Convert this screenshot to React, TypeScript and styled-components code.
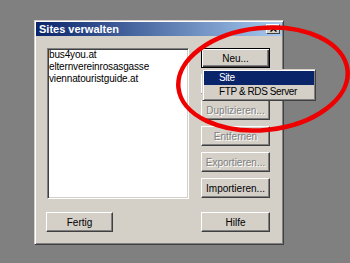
import styled, { createGlobalStyle } from "styled-components";

const GlobalStyle = createGlobalStyle`
  body {
    margin: 0;
    background: #808080;
    font-family: "Liberation Sans", Arial, sans-serif;
  }
`;

const Page = styled.div`
  position: relative;
  width: 350px;
  height: 263px;
  box-sizing: border-box;
  padding: 20px 0 0 34px;
  background: #808080;
`;

const Dialog = styled.div`
  width: 250px;
  height: 225px;
  box-sizing: border-box;
  padding: 1px;
  background: #d4d0c8;
  border: 1px solid;
  border-color: #d4d0c8 #404040 #404040 #d4d0c8;
  box-shadow: inset 1px 1px #fff, inset -1px -1px #808080;
`;

const TitleBar = styled.div`
  height: 14px;
  display: flex;
  align-items: center;
  justify-content: space-between;
  padding: 0 2px 0 3px;
  background: linear-gradient(to right, #0a246a, #a6caf0);
`;

const Title = styled.span`
  color: #fff;
  font-weight: bold;
  font-size: 11px;
  line-height: 14px;
`;

const CloseButton = styled.div`
  width: 14px;
  height: 10px;
  box-sizing: border-box;
  display: flex;
  align-items: center;
  justify-content: center;
  background: #d4d0c8;
  border: 1px solid;
  border-color: #fff #404040 #404040 #fff;
`;

const Body = styled.div`
  display: grid;
  grid-template-columns: 142px 69px;
  grid-template-rows: 151px 20px;
  column-gap: 12px;
  row-gap: 13px;
  padding: 12px 13px 0 11px;
`;

const ListBox = styled.div`
  background: #fff;
  border: 1px solid;
  border-color: #808080 #fff #fff #808080;
  box-shadow: inset 1px 1px #404040, inset -1px -1px #d4d0c8;
  padding: 0 1px;
`;

const ListItem = styled.div`
  font-size: 10px;
  line-height: 12px;
  letter-spacing: -0.15px;
  color: #000;
`;

const ButtonColumn = styled.div`
  position: relative;
  display: flex;
  flex-direction: column;
  gap: 6px;
`;

const Button = styled.div<{ $disabled?: boolean; $isDefault?: boolean; $width?: number }>`
  width: ${(p) => p.$width ?? 69}px;
  height: 20px;
  box-sizing: border-box;
  display: flex;
  align-items: center;
  justify-content: center;
  background: #d4d0c8;
  font-size: 10px;
  border: 1px solid;
  border-color: ${(p) => (p.$isDefault ? "#000" : "#fff #404040 #404040 #fff")};
  box-shadow: ${(p) =>
    p.$isDefault
      ? "inset 1px 1px #fff, inset -1px -1px #404040, inset -2px -2px #808080"
      : "inset -1px -1px #808080"};
  color: ${(p) => (p.$disabled ? "#808080" : "#000")};
  text-shadow: ${(p) => (p.$disabled ? "1px 1px #fff" : "none")};
`;

const LeftFooter = styled.div`
  margin-left: -1px;
`;

const Menu = styled.div`
  position: absolute;
  top: 21px;
  left: 1px;
  width: 114px;
  box-sizing: border-box;
  padding: 1px;
  background: #d4d0c8;
  border: 1px solid;
  border-color: #d4d0c8 #404040 #404040 #d4d0c8;
  box-shadow: inset 1px 1px #fff, inset -1px -1px #808080;
`;

const MenuItem = styled.div<{ $active?: boolean }>`
  height: 14px;
  line-height: 14px;
  padding-left: 15px;
  font-size: 10px;
  letter-spacing: -0.4px;
  background: ${(p) => (p.$active ? "#0a246a" : "transparent")};
  color: ${(p) => (p.$active ? "#fff" : "#000")};
`;

const Marker = styled.svg`
  position: absolute;
  left: 0;
  top: 0;
  pointer-events: none;
`;

const sites = ["bus4you.at", "elternvereinrosasgasse", "viennatouristguide.at"];

export default function App() {
  return (
    <Page>
      <GlobalStyle />
      <Dialog>
        <TitleBar>
          <Title>Sites verwalten</Title>
          <CloseButton>
            <svg width="7" height="6" viewBox="0 0 7 6">
              <path d="M0.5 0.5 L6.5 5.5 M6.5 0.5 L0.5 5.5" stroke="#000" strokeWidth="1.4" />
            </svg>
          </CloseButton>
        </TitleBar>
        <Body>
          <ListBox>
            {sites.map((s) => (
              <ListItem key={s}>{s}</ListItem>
            ))}
          </ListBox>
          <ButtonColumn>
            <Button $isDefault>Neu...</Button>
            {/* covered by the open menu */}
            <Button $disabled />
            <Button $disabled>Duplizieren...</Button>
            <Button $disabled>Entfernen</Button>
            <Button $disabled>Exportieren...</Button>
            <Button>Importieren...</Button>
            <Menu>
              <MenuItem $active>Site</MenuItem>
              <MenuItem>FTP &amp; RDS Server</MenuItem>
            </Menu>
          </ButtonColumn>
          <LeftFooter>
            <Button $width={67}>Fertig</Button>
          </LeftFooter>
          <Button>Hilfe</Button>
        </Body>
      </Dialog>
      <Marker width="350" height="263" viewBox="0 0 350 263">
        <ellipse
          cx="263"
          cy="79"
          rx="85"
          ry="51"
          fill="none"
          stroke="#ee0000"
          strokeWidth="4.5"
          transform="rotate(-6 263 79)"
        />
      </Marker>
    </Page>
  );
}
